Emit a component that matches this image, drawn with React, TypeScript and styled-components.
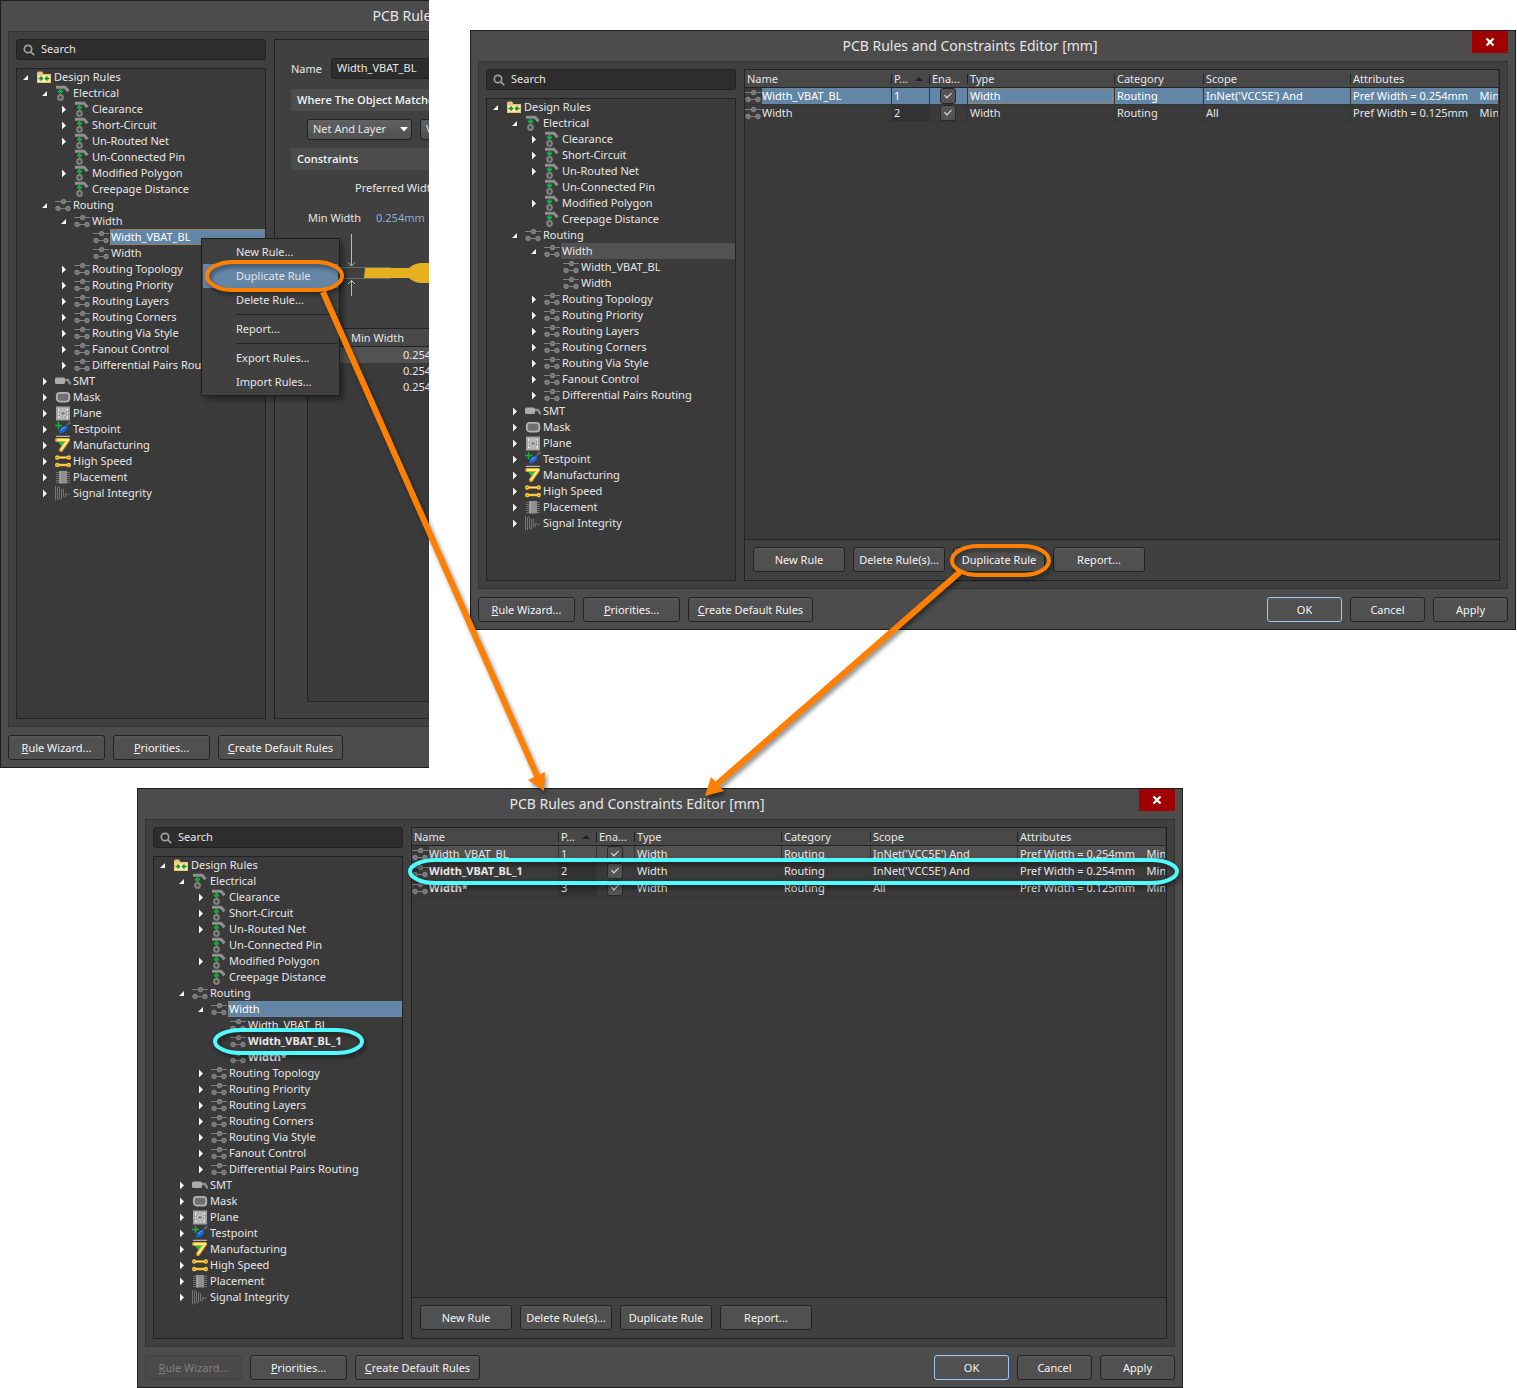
import React from "react";
import styled, { createGlobalStyle, css } from "styled-components";

const color = {
  frame: "#1e1e1e",
  chrome: "#4c4c4c",
  panel: "#404040",
  panelEdge: "#333333",
  well: "#3a3a3a",
  line: "#222222",
  field: "#2d2d2d",
  select: "#6385a6",
  dim: "#525252",
  text: "#e6e6e6",
  orange: "#ff8000",
  cyan: "#50faff",
};

const GlobalStyle = createGlobalStyle`
  *, *::before, *::after { box-sizing: border-box; }
  body {
    margin: 0;
    background: #ffffff;
    color: ${color.text};
    font: 11px/16px "Noto Sans", "Open Sans", sans-serif;
  }
  button, input, select { font: inherit; color: inherit; margin: 0; }
`;

/* ---------- canvas ---------- */

const Canvas = styled.main`
  position: relative;
  display: flex;
  flex-direction: column;
  gap: 20px;
`;

const TopRow = styled.div`
  display: grid;
  grid-template-columns: 429px minmax(0, 1fr);
  column-gap: 41px;
  align-items: start;
  padding-right: 1px;
`;

const Crop = styled.div`
  position: relative;
  overflow: hidden;
`;

const Lowered = styled.div`
  padding-top: 30px;
`;

const BottomRow = styled.div`
  padding: 0 334px 0 137px;
`;

const Annotations = styled.svg`
  position: absolute;
  inset: 0;
  width: 100%;
  height: 100%;
  pointer-events: none;
  filter: drop-shadow(2px 3px 2px rgba(0, 0, 0, 0.45));
`;

/* ---------- dialog ---------- */

const Dialog = styled.section<{ $tall?: boolean }>`
  position: relative;
  display: flex;
  flex-direction: column;
  min-height: ${(p) => (p.$tall ? 768 : 600)}px;
  width: ${(p) => (p.$tall ? "1046px" : "auto")};
  padding: 0 7px 7px;
  border: 1px solid ${color.frame};
  background: ${color.chrome};
`;

const TitleBar = styled.header`
  display: flex;
  align-items: center;
  justify-content: center;
  height: 30px;
  padding-right: 46px;
`;

const Title = styled.h1`
  margin: 0;
  font-size: 14px;
  font-weight: 400;
  line-height: 20px;
`;

const CloseButton = styled.button`
  position: absolute;
  top: 0;
  right: 7px;
  display: grid;
  place-items: center;
  width: 36px;
  height: 22px;
  padding: 0;
  border: 0;
  background: #a00000;
`;

const Body = styled.div`
  flex: 1;
  display: grid;
  grid-template-columns: 250px minmax(0, 1fr);
  gap: 8px;
  padding: 7px;
  border: 1px solid ${color.panelEdge};
  background: ${color.panel};
`;

const Sidebar = styled.div`
  display: flex;
  flex-direction: column;
  gap: 8px;
`;

const SearchBox = styled.label`
  display: flex;
  align-items: center;
  gap: 6px;
  height: 21px;
  padding: 0 6px;
  border: 1px solid ${color.line};
  border-radius: 3px;
  background: ${color.field};
`;

const SearchInput = styled.input`
  flex: 1;
  min-width: 0;
  height: 19px;
  padding: 0 0 2px;
  border: 0;
  outline: 0;
  background: none;
  &::placeholder { color: ${color.text}; opacity: 1; }
`;

const Footer = styled.footer`
  display: flex;
  gap: 8px;
  padding-top: 8px;
`;

const Spacer = styled.span`
  flex: 1;
`;

const Button = styled.button<{ $width: number; $primary?: boolean }>`
  width: ${(p) => p.$width}px;
  height: 25px;
  padding: 0;
  border: 1px solid ${(p) => (p.$primary ? "#9cc8f4" : color.line)};
  border-radius: 3px;
  background: linear-gradient(#5a5a5a, #505050 3px);
  color: #f4f4f4;
  line-height: 16px;
  white-space: nowrap;
  &:disabled {
    border-color: #424242;
    background: #4a4a4a;
    color: #808080;
  }
`;

/* ---------- tree ---------- */

const Tree = styled.ul`
  flex: 1;
  margin: 0;
  padding: 0;
  list-style: none;
  border: 1px solid ${color.line};
  background: ${color.well};
`;

const TreeRow = styled.li<{ $level: number }>`
  display: flex;
  align-items: center;
  height: 16px;
  padding-left: ${(p) => p.$level * 19 + 5}px;
`;

type Mark = "blue" | "grey" | undefined;

const TreeLabel = styled.span<{ $mark?: Mark; $bold?: boolean }>`
  flex: 1;
  height: 16px;
  padding-left: 1px;
  white-space: nowrap;
  font-weight: ${(p) => (p.$bold ? 700 : 400)};
  ${(p) =>
    p.$mark === "blue" &&
    css`
      background: ${color.select};
      outline: 1px dotted #a08468;
      outline-offset: -1px;
      color: #ffffff;
    `}
  ${(p) => p.$mark === "grey" && css`background: ${color.dim};`}
`;

const Twisty = styled.svg`
  flex: none;
  width: 14px;
  height: 16px;
`;

const Glyph = styled.svg`
  flex: none;
  width: 17px;
  height: 16px;
`;

/* ---------- rules table ---------- */

const Pane = styled.div`
  display: flex;
  flex-direction: column;
  min-width: 0;
  border: 1px solid ${color.line};
  background: ${color.panel};
`;

const TableWell = styled.div`
  flex: 1;
  padding-right: 1px;
  background: ${color.well};
`;

const RuleTable = styled.table`
  width: 100%;
  table-layout: fixed;
  border-collapse: separate;
  border-spacing: 0;
`;

const HeadCell = styled.th<{ $first?: boolean }>`
  height: 18px;
  padding: 0 0 0 ${(p) => (p.$first ? 2 : 3)}px;
  overflow: hidden;
  border-bottom: 1px solid ${color.line};
  background:
    linear-gradient(#222222, #222222) 0 4px / ${(p) => (p.$first ? 0 : 1)}px 10px no-repeat,
    #484848;
  font-weight: 400;
  text-align: left;
  line-height: 16px;
  white-space: nowrap;
`;

const HeadContent = styled.span`
  display: flex;
  align-items: center;
  gap: 7px;
`;

const Cell = styled.td<{ $dark?: boolean; $bold?: boolean }>`
  height: 17px;
  padding: 0 0 0 2px;
  overflow: hidden;
  border-bottom: 1px solid #353535;
  border-left: 1px solid #353535;
  background: ${(p) => (p.$dark ? "#323232" : "transparent")};
  font-weight: ${(p) => (p.$bold ? 700 : 400)};
  line-height: 16px;
  white-space: pre;
`;

const BodyRow = styled.tr<{ $mark?: Mark }>`
  ${(p) =>
    p.$mark === "blue" &&
    css`
      ${Cell} { background: ${color.select}; color: #ffffff; }
      ${Cell}:nth-child(4) { outline: 1px dotted #a08468; outline-offset: -2px; }
    `}
  ${(p) => p.$mark === "grey" && css`${Cell} { background: ${color.dim}; }`}
  ${Cell}:first-child { padding: 0; border-left: 0; background: none; }
`;

const NameCell = styled.span`
  display: flex;
  height: 16px;
`;

const NameText = styled.span<{ $mark?: Mark }>`
  flex: 1;
  background: ${(p) => (p.$mark === "blue" ? color.select : p.$mark === "grey" ? color.dim : "none")};
`;

const Check = styled.input`
  && { margin: 0 0 0 8px; }
  display: block;
  position: relative;
  appearance: none;
  width: 16px;
  height: 16px;
  border: 1px solid #282828;
  border-radius: 3px;
  background: #545454;
  &:checked::after {
    content: "";
    position: absolute;
    left: 5px;
    top: 2px;
    width: 4px;
    height: 7px;
    border: solid #e8e8e8;
    border-width: 0 1px 1px 0;
    transform: rotate(45deg);
  }
`;

const ActionBar = styled.div`
  display: flex;
  gap: 8px;
  padding: 7px 8px 8px;
  border-top: 1px solid ${color.line};
`;

/* ---------- rule detail ---------- */

const Detail = styled.div`
  display: flex;
  flex-direction: column;
  gap: 8px;
  padding: 18px 16px 16px;
  border: 1px solid ${color.line};
`;

const NameLine = styled.label`
  display: grid;
  grid-template-columns: 40px 1fr;
  align-items: center;
  height: 21px;
  margin-bottom: 2px;
`;

const NameInput = styled.input`
  height: 21px;
  padding: 0 5px 2px;
  border: 1px solid ${color.line};
  border-radius: 3px;
  background: ${color.field};
`;

const Section = styled.h2`
  margin: 0;
  padding: 3px 6px;
  background: #4c4c4c;
  color: #f4f4f4;
  font-family: "Open Sans", "Noto Sans", sans-serif;
  font-size: 11px;
  font-weight: 600;
  line-height: 16px;
`;

const SelectLine = styled.div`
  display: flex;
  gap: 8px;
  padding-left: 16px;
`;

const SelectWrap = styled.span`
  display: grid;
  align-items: center;
  > * { grid-area: 1 / 1; }
  > svg { justify-self: end; margin-right: 4px; pointer-events: none; }
`;

const Select = styled.select`
  appearance: none;
  width: 105px;
  height: 21px;
  padding: 0 16px 2px 5px;
  border: 1px solid ${color.line};
  border-radius: 3px;
  background: linear-gradient(#616161, #505050);
`;

const Preferred = styled.p`
  margin: 2px 0 6px 64px;
`;

const WidthLine = styled.p`
  display: flex;
  gap: 15px;
  margin: 0 0 0 17px;
`;

const Value = styled.span`
  color: #8eacd0;
`;

const TrackDrawing = styled.svg`
  display: block;
  width: 200px;
  height: 70px;
  margin: -2px 0 18px 16px;
`;

const LayerWell = styled.div`
  flex: 1;
  margin-left: 16px;
  border: 1px solid ${color.line};
  background: ${color.well};
`;

const LayerTable = styled.table`
  border-collapse: separate;
  border-spacing: 0;
  width: 100%;
  table-layout: fixed;
  th {
    height: 18px;
    padding: 0 0 0 43px;
    border-bottom: 1px solid ${color.line};
    background: #484848;
    font-weight: 400;
    text-align: left;
  }
  td { height: 16px; padding: 0 0 0 95px; }
  tbody tr:first-child td { background: ${color.dim}; }
`;

/* ---------- context menu ---------- */

const Menu = styled.div`
  position: absolute;
  left: 201px;
  top: 238px;
  display: flex;
  flex-direction: column;
  width: 139px;
  padding: 1px;
  border: 1px solid ${color.frame};
  background: ${color.panel};
  box-shadow: 4px 4px 5px rgba(0, 0, 0, 0.35);
`;

const MenuItem = styled.button<{ $active?: boolean }>`
  height: 24px;
  padding: 0 0 0 33px;
  border: 0;
  background: ${(p) => (p.$active ? color.select : "none")};
  text-align: left;
`;

const MenuRule = styled.hr`
  width: 102px;
  margin: 2px 0 2px auto;
  border: 0;
  border-top: 1px solid ${color.line};
`;

/* ---------- icons ---------- */

type IconName =
  | "folder" | "electrical" | "routing" | "smt" | "mask" | "plane"
  | "testpoint" | "manufacturing" | "highspeed" | "placement" | "signal";

const drawings: Record<IconName, React.ReactNode> = {
  folder: (
    <>
      <path d="M1 14V4l1-1.500h4L7.500 5H15v9z" fill="#e8c878" />
      <path d="M2 6.500h12V13H2z" fill="#fbe7a6" />
      <path d="M2.500 9.500h4M4.500 7.500l2 2-2 2M13.500 9.500h-4M11.500 7.500l-2 2 2 2" stroke="#0f8f2a" strokeWidth="1.400" fill="none" />
    </>
  ),
  electrical: (
    <>
      <path d="M1 2.300h9l3.500 4" stroke="#909090" strokeWidth="3" fill="none" />
      <path d="M5.500 3.500l3 3-3 3-3-3z" fill="#0c8a30" />
      <path d="M5 4h1v1H5zM4 5h1v1H4zM6 5h1v1H6zM3 6h1v1H3zM5 6h1v1H5zM7 6h1v1H7zM4 7h1v1H4zM6 7h1v1H6zM5 8h1v1H5z" fill="#14c844" />
      <circle cx="5.500" cy="12.500" r="2.400" fill="#4a4a4a" stroke="#808080" strokeWidth="2" />
    </>
  ),
  routing: (
    <g stroke="#808080" fill="#5a5a5a">
      <path d="M0 4.500h16M3 11.500h10" strokeWidth="1.200" />
      <circle cx="8.500" cy="4.500" r="1.700" strokeWidth="1.900" />
      <circle cx="3" cy="11.500" r="1.700" strokeWidth="1.900" />
      <circle cx="13" cy="11.500" r="1.700" strokeWidth="1.900" />
    </g>
  ),
  smt: (
    <>
      <path d="M9 7h4l2 3.500" stroke="#8f8f8f" strokeWidth="2.400" fill="none" strokeLinecap="round" />
      <rect y="4.500" width="10" height="6.500" rx="1.500" fill="#ababab" />
    </>
  ),
  mask: <rect x="1.800" y="3.800" width="12.500" height="8.800" rx="3" fill="#707070" stroke="#b4b4b4" strokeWidth="1.800" />,
  plane: (
    <>
      <rect x="1" y="1.500" width="14" height="14" fill="#a2a2a2" />
      <rect x="3.500" y="4" width="9" height="9" fill="none" stroke="#e4e4e4" strokeDasharray="2 1" />
      <circle cx="8" cy="8.500" r="2.600" fill="#8a8a8a" stroke="#dedede" />
      <path d="M3 3.500l2 2M13 3.500l-2 2M3 13.500l2-2M13 13.500l-2-2" stroke="#efefef" />
    </>
  ),
  testpoint: (
    <>
      <path d="M12 4l3.500-3" stroke="#666" strokeWidth="2" />
      <path d="M4 12.500c0-5 4-8 8-8 1 4-3 8-8 8z" fill="#1668e4" />
      <path d="M6.500 9c1-2 2.500-2.500 3.500-2.500" stroke="#6fb4ff" fill="none" />
      <path d="M0 4.500h7M3.500 1v7" stroke="#14b436" strokeWidth="1.400" />
      <path d="M1 15.300h14" stroke="#cfcfcf" />
    </>
  ),
  manufacturing: (
    <>
      <path d="M3 5l5 6 2.500-6z" fill="#10c050" />
      <path d="M2 3h11L6 13" stroke="#e0a820" strokeWidth="4" fill="none" strokeLinejoin="round" strokeLinecap="round" />
      <path d="M2 3h11L6 13" stroke="#ffef90" strokeWidth="2" fill="none" />
    </>
  ),
  highspeed: (
    <>
      <path d="M2 4.500h12M2 12h12" stroke="#f0a818" strokeWidth="2.600" />
      <path d="M2 4.500h12M2 12h12" stroke="#ffe67a" />
      <g fill="#5a3c00" stroke="#ffc832" strokeWidth="1.600">
        <circle cx="2.200" cy="4.500" r="1.400" /><circle cx="13.800" cy="4.500" r="1.400" />
        <circle cx="2.200" cy="12" r="1.400" /><circle cx="13.800" cy="12" r="1.400" />
      </g>
    </>
  ),
  placement: (
    <>
      <path d="M1 3.500h14M1 5.500h14M1 7.500h14M1 9.500h14M1 11.500h14M1 13.500h14" stroke="#707070" />
      <rect x="4" y="2" width="8" height="12.500" fill="#8f8f8f" />
      <path d="M5.500 2v12.500" stroke="#a8a8a8" />
    </>
  ),
  signal: (
    <path
      d="M.5 1v14.500M2.500 15V3c0-1.500 2-1.500 2 0v10c0 1.500 2 1.500 2 0V5c0-1.500 2-1.500 2 0v6c0 1.500 1.500 1.500 2 0V9c0-1.500 1-1.500 1.500 0s1 1.500 1.500.5 1-.5 1.500 0"
      stroke="#747474"
      fill="none"
    />
  ),
};

const Icon = ({ name }: { name: IconName }) => (
  <Glyph viewBox="0 0 17 16" aria-hidden="true">{drawings[name]}</Glyph>
);

/* ---------- data ---------- */

interface Node {
  level: number;
  label: string;
  icon: IconName;
  state?: "open" | "closed";
  mark?: Mark;
  bold?: boolean;
}

const node = (level: number, icon: IconName, label: string, state?: Node["state"], extra: Partial<Node> = {}): Node =>
  ({ level, icon, label, state, ...extra });

const buildTree = (widthMark: Mark, widthRules: Node[]): Node[] => [
  node(0, "folder", "Design Rules", "open"),
  node(1, "electrical", "Electrical", "open"),
  node(2, "electrical", "Clearance", "closed"),
  node(2, "electrical", "Short-Circuit", "closed"),
  node(2, "electrical", "Un-Routed Net", "closed"),
  node(2, "electrical", "Un-Connected Pin"),
  node(2, "electrical", "Modified Polygon", "closed"),
  node(2, "electrical", "Creepage Distance"),
  node(1, "routing", "Routing", "open"),
  node(2, "routing", "Width", "open", { mark: widthMark }),
  ...widthRules,
  ...["Routing Topology", "Routing Priority", "Routing Layers", "Routing Corners", "Routing Via Style", "Fanout Control", "Differential Pairs Routing"]
    .map((label) => node(2, "routing", label, "closed")),
  node(1, "smt", "SMT", "closed"),
  node(1, "mask", "Mask", "closed"),
  node(1, "plane", "Plane", "closed"),
  node(1, "testpoint", "Testpoint", "closed"),
  node(1, "manufacturing", "Manufacturing", "closed"),
  node(1, "highspeed", "High Speed", "closed"),
  node(1, "placement", "Placement", "closed"),
  node(1, "signal", "Signal Integrity", "closed"),
];

interface Rule {
  name: string;
  priority: number;
  scope: string;
  width: string;
  mark?: Mark;
  bold?: boolean;
}

/* ---------- composed parts ---------- */

const Frame = ({ tree, tall, wizardDisabled, confirm, children }: {
  tree: Node[];
  tall?: boolean;
  wizardDisabled?: boolean;
  confirm?: boolean;
  children: React.ReactNode;
}) => (
  <Dialog $tall={tall}>
    <TitleBar><Title>PCB Rules and Constraints Editor [mm]</Title></TitleBar>
    {confirm && (
      <CloseButton aria-label="Close">
        <svg width="10" height="10" viewBox="0 0 10 10"><path d="M1.500 1.500l7 7M8.500 1.500l-7 7" stroke="#fff" strokeWidth="2.300" /></svg>
      </CloseButton>
    )}
    <Body>
      <Sidebar>
        <SearchBox>
          <svg width="12" height="12" viewBox="0 0 12 12" fill="none" stroke="#a0a0a0" strokeWidth="1.700" aria-hidden="true">
            <circle cx="5" cy="5" r="3.700" /><path d="M7.800 7.800l3.400 3.400" />
          </svg>
          <SearchInput type="text" placeholder="Search" aria-label="Search" />
        </SearchBox>
        <Tree>
          {tree.map((n, i) => (
            <TreeRow key={i} $level={n.level}>
              <Twisty viewBox="0 0 14 16" aria-hidden="true">
                {n.state === "open" && <path d="M6 6v5H1z" fill="#f4f4f4" />}
                {n.state === "closed" && <path d="M2 4.500l4 4-4 4z" fill="#f4f4f4" />}
              </Twisty>
              <Icon name={n.icon} />
              <TreeLabel $mark={n.mark} $bold={n.bold}>{n.label}</TreeLabel>
            </TreeRow>
          ))}
        </Tree>
      </Sidebar>
      {children}
    </Body>
    <Footer>
      <Button $width={97} disabled={wizardDisabled}><u>R</u>ule Wizard...</Button>
      <Button $width={97}><u>P</u>riorities...</Button>
      <Button $width={125}><u>C</u>reate Default Rules</Button>
      <Spacer />
      {confirm && (
        <>
          <Button $width={75} $primary>OK</Button>
          <Button $width={75}>Cancel</Button>
          <Button $width={75}>Apply</Button>
        </>
      )}
    </Footer>
  </Dialog>
);

const RulesPane = ({ rules }: { rules: Rule[] }) => (
  <Pane>
    <TableWell>
      <RuleTable>
        <colgroup>
          <col style={{ width: 146 }} /><col style={{ width: 38 }} /><col style={{ width: 38 }} />
          <col style={{ width: 147 }} /><col style={{ width: 89 }} /><col style={{ width: 147 }} /><col />
        </colgroup>
        <thead>
          <tr>
            <HeadCell $first>Name</HeadCell>
            <HeadCell>
              <HeadContent>
                P...
                <svg width="8" height="4" viewBox="0 0 8 4" aria-hidden="true"><path d="M0 4l4-4 4 4z" fill="#222" /></svg>
              </HeadContent>
            </HeadCell>
            {["Ena...", "Type", "Category", "Scope", "Attributes"].map((h) => <HeadCell key={h}>{h}</HeadCell>)}
          </tr>
        </thead>
        <tbody>
          {rules.map((r) => (
            <BodyRow key={r.priority} $mark={r.mark}>
              <Cell $bold={r.bold}>
                <NameCell><Icon name="routing" /><NameText $mark={r.mark}>{r.name}</NameText></NameCell>
              </Cell>
              <Cell $dark>{r.priority}</Cell>
              <Cell><Check type="checkbox" defaultChecked aria-label={`Enable ${r.name}`} /></Cell>
              <Cell>Width</Cell>
              <Cell>Routing</Cell>
              <Cell>{r.scope}</Cell>
              <Cell>{`Pref Width = ${r.width}    Min`}</Cell>
            </BodyRow>
          ))}
        </tbody>
      </RuleTable>
    </TableWell>
    <ActionBar>
      {["New Rule", "Delete Rule(s)...", "Duplicate Rule", "Report..."].map((t) => <Button key={t} $width={92}>{t}</Button>)}
    </ActionBar>
  </Pane>
);

const DropArrow = () => (
  <svg width="8" height="5" viewBox="0 0 8 5" aria-hidden="true"><path d="M0 0h8L4 4.500z" fill="#fff" /></svg>
);

const DetailPane = () => (
  <Detail>
    <NameLine>Name<NameInput type="text" defaultValue="Width_VBAT_BL" /></NameLine>
    <Section>Where The Object Matches</Section>
    <SelectLine>
      <SelectWrap>
        <Select aria-label="Scope" defaultValue="Net And Layer"><option>Net And Layer</option></Select>
        <DropArrow />
      </SelectWrap>
      <SelectWrap>
        <Select aria-label="Net" defaultValue="VCC5E"><option>VCC5E</option></Select>
        <DropArrow />
      </SelectWrap>
    </SelectLine>
    <Section>Constraints</Section>
    <Preferred>Preferred Width</Preferred>
    <WidthLine>Min Width<Value>0.254mm</Value></WidthLine>
    <TrackDrawing viewBox="0 0 200 70" fill="none" aria-hidden="true">
      <path d="M0 35.500h84M0 46.500h84" stroke="#6a6a6a" />
      <path d="M58 36h44c6-5 10-5 16-5h82v20h-82c-6 0-10 0-16-5H57z" fill="#e6b01e" />
      <path d="M44.500 2v32M41 30.500l3.500 3.500 3.500-3.500M44.500 64V48M41 52l3.500-3.500 3.500 3.500" stroke="#8fcfc4" />
    </TrackDrawing>
    <LayerWell>
      <LayerTable>
        <thead><tr><th>Min Width</th></tr></thead>
        <tbody>
          {[1, 2, 3].map((k) => <tr key={k}><td>0.254mm</td></tr>)}
        </tbody>
      </LayerTable>
    </LayerWell>
  </Detail>
);

const plainWidthRules = (mark?: Mark) => [
  node(3, "routing", "Width_VBAT_BL", undefined, { mark }),
  node(3, "routing", "Width"),
];

export default function App() {
  return (
    <>
      <GlobalStyle />
      <Canvas>
        <TopRow>
          <Crop>
            <Frame tall tree={buildTree(undefined, plainWidthRules("blue"))}><DetailPane /></Frame>
            <Menu role="menu">
              <MenuItem role="menuitem">New Rule...</MenuItem>
              <MenuItem role="menuitem" $active>Duplicate Rule</MenuItem>
              <MenuItem role="menuitem">Delete Rule...</MenuItem>
              <MenuRule />
              <MenuItem role="menuitem">Report...</MenuItem>
              <MenuRule />
              <MenuItem role="menuitem">Export Rules...</MenuItem>
              <MenuItem role="menuitem">Import Rules...</MenuItem>
            </Menu>
          </Crop>
          <Lowered>
            <Frame confirm tree={buildTree("grey", plainWidthRules())}>
              <RulesPane
                rules={[
                  { name: "Width_VBAT_BL", priority: 1, scope: "InNet('VCC5E') And", width: "0.254mm", mark: "blue" },
                  { name: "Width", priority: 2, scope: "All", width: "0.125mm" },
                ]}
              />
            </Frame>
          </Lowered>
        </TopRow>
        <BottomRow>
          <Frame
            confirm
            wizardDisabled
            tree={buildTree("blue", [
              node(3, "routing", "Width_VBAT_BL"),
              node(3, "routing", "Width_VBAT_BL_1", undefined, { bold: true }),
              node(3, "routing", "Width*", undefined, { bold: true }),
            ])}
          >
            <RulesPane
              rules={[
                { name: "Width_VBAT_BL", priority: 1, scope: "InNet('VCC5E') And", width: "0.254mm", mark: "grey" },
                { name: "Width_VBAT_BL_1", priority: 2, scope: "InNet('VCC5E') And", width: "0.254mm", bold: true },
                { name: "Width*", priority: 3, scope: "All", width: "0.125mm", bold: true },
              ]}
            />
          </Frame>
        </BottomRow>
        <Annotations fill="none" aria-hidden="true">
          <g stroke={color.orange} strokeWidth="4">
            <rect x="207" y="262" width="135" height="28" rx="26" ry="14" />
            <rect x="952" y="546" width="97" height="29" rx="26" ry="15" />
            <path d="M323 292L538 778M960 572L716 785" strokeWidth="6" />
          </g>
          <path d="M544 791L528 780L545 772ZM705 796L711 777L724 791Z" fill={color.orange} />
          <g stroke={color.cyan} strokeWidth="4">
            <rect x="215" y="1030" width="147" height="23" rx="26" ry="12" />
            <rect x="410" y="860" width="767" height="23" rx="26" ry="12" />
          </g>
        </Annotations>
      </Canvas>
    </>
  );
}
